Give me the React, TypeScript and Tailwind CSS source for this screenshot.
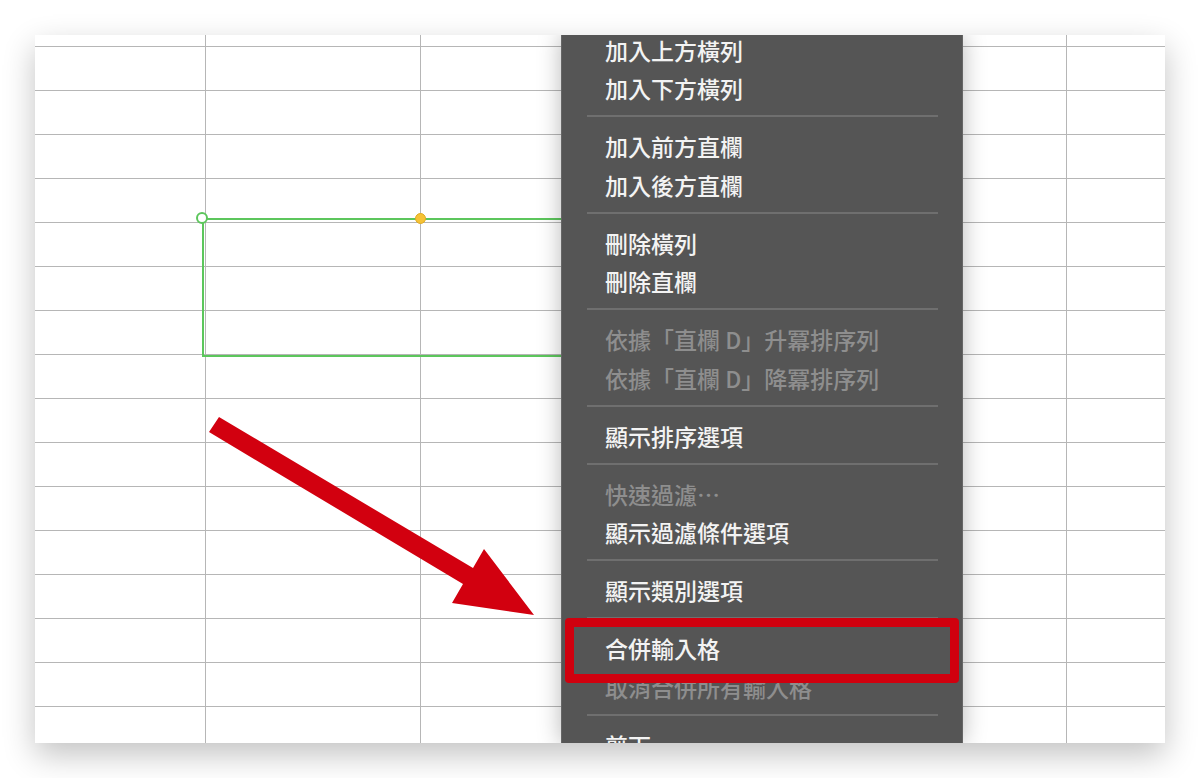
type MenuEntry = { label: string; disabled?: boolean } | "sep";

const menu: MenuEntry[] = [
  { label: "加入上方橫列" },
  { label: "加入下方橫列" },
  "sep",
  { label: "加入前方直欄" },
  { label: "加入後方直欄" },
  "sep",
  { label: "刪除橫列" },
  { label: "刪除直欄" },
  "sep",
  { label: "依據「直欄 D」升冪排序列", disabled: true },
  { label: "依據「直欄 D」降冪排序列", disabled: true },
  "sep",
  { label: "顯示排序選項" },
  "sep",
  { label: "快速過濾⋯", disabled: true },
  { label: "顯示過濾條件選項" },
  "sep",
  { label: "顯示類別選項" },
  "sep",
  { label: "合併輸入格" },
  { label: "取消合併所有輸入格", disabled: true },
  "sep",
  { label: "剪下" },
];

const colWidths = ["w-[171px]", "w-[215px]", "w-[216px]", "w-[215px]", "w-[215px]", "flex-1"];
const rows = Array.from({ length: 17 }, (_, i) => i);

const Grid = () => (
  <div className="flex flex-col">
    {rows.map((r) => (
      <div
        key={r}
        className={`flex border-b border-[#b6b6b6] ${r === 0 ? "h-[12px]" : "h-[44px]"}`}
      >
        {colWidths.map((w, c) => (
          <div key={c} className={`${w} h-full ${c < 5 ? "border-r border-[#b6b6b6]" : ""}`} />
        ))}
      </div>
    ))}
  </div>
);

const Menu = () => (
  <div className="absolute left-[526px] top-0 bottom-0 w-[402px] bg-[#555555] border-x border-[#666666] shadow-[0_0_22px_rgba(0,0,0,0.28)] overflow-hidden font-['Noto_Sans_CJK_TC','Noto_Sans',sans-serif]">
    <div className="-mt-[4px] flex flex-col">
      {menu.map((m, i) =>
        m === "sep" ? (
          <div key={i} className="pt-[7px] pb-[10.5px] pl-[25px] pr-[24px]">
            <div className="h-[2px] bg-[#6f6f6f]" />
          </div>
        ) : (
          <div
            key={i}
            className={`h-[38.5px] flex items-center pl-[43px] text-[23px] font-medium leading-none ${
              m.disabled ? "text-[#8e8e8e]" : "text-[#f3f3f3]"
            }`}
          >
            {m.label}
          </div>
        )
      )}
    </div>
  </div>
);

const Arrow = () => (
  <svg className="absolute left-0 top-0" width="1130" height="708" viewBox="0 0 1130 708">
    <polygon
      points="184,382 438,533 449,514 499,580 417,568 428,549 174,397"
      fill="#d2000f"
    />
  </svg>
);

export default function App() {
  return (
    <div className="w-full h-[778px] bg-white p-[35px]">
      <div className="relative w-[1130px] h-[708px] bg-white overflow-hidden shadow-[0_12px_30px_rgba(0,0,0,0.24)]">
        <Grid />

        {/* selection */}
        <div className="absolute left-[167px] top-[183px] w-[420px] h-[139px] border-2 border-[#5cc65c]" />
        <div className="absolute left-[161px] top-[177px] w-[12px] h-[12px] rounded-full bg-white border-2 border-[#5cc65c]" />
        <div className="absolute left-[380px] top-[178px] w-[11px] h-[11px] rounded-full bg-[#f6c236] border border-[#e0ab20]" />

        <Arrow />
        <Menu />

        {/* highlight */}
        <div className="absolute left-[530px] top-[583px] w-[394px] h-[65px] border-[9px] border-[#d0000e] rounded-[4px]" />
      </div>
    </div>
  );
}
